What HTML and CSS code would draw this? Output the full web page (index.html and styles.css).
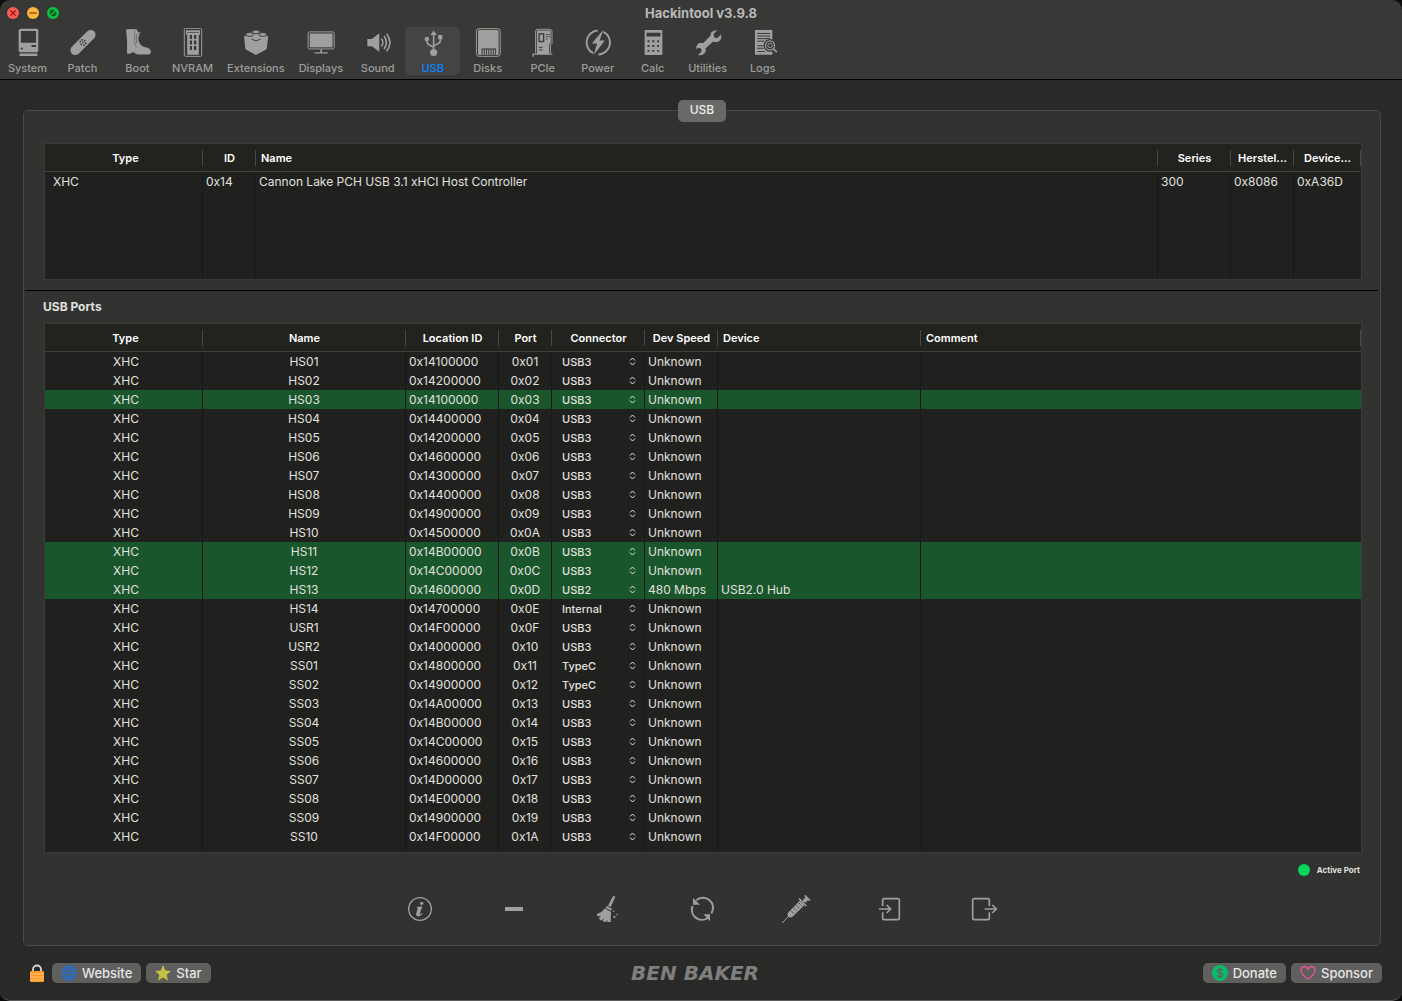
FILE: index.html
```html
<!DOCTYPE html>
<html lang="en">
<head>
<meta charset="utf-8">
<meta name="viewport" content="width=device-width, initial-scale=1">
<title>Hackintool v3.9.8</title>
<link rel="stylesheet" href="styles.css">
<script src="script.js" defer></script>
</head>
<body>
<div class="window">
  <header class="chrome">
    <div class="titlebar">
      <div class="lights">
        <button class="light" type="button" aria-label="Close"><svg viewBox="0 0 12 12"><circle cx="6" cy="6" r="6" fill="#fb5b57"/><path d="M3.4 3.4l5.2 5.2M8.6 3.4L3.4 8.6" stroke="#8c1410" stroke-width="1.2"/></svg></button>
        <button class="light" type="button" aria-label="Minimize"><svg viewBox="0 0 12 12"><circle cx="6" cy="6" r="6" fill="#fdb63f"/><path d="M2.2 6h7.6" stroke="#985712" stroke-width="1.5"/></svg></button>
        <button class="light" type="button" aria-label="Zoom"><svg viewBox="0 0 12 12"><circle cx="6" cy="6" r="6" fill="#05c446"/><circle cx="6" cy="6" r="3.4" fill="#0a5c1c"/><path d="M3.200 8.800L8.800 3.200" stroke="#05c446" stroke-width="1.400"/></svg></button>
      </div>
      <h1 class="title">Hackintool v3.9.8</h1>
    </div>
    <nav class="toolbar" aria-label="Sections">
      <button class="tool" type="button"><svg viewBox="0 0 90 90"><rect x="16" y="2" width="61" height="73" rx="6"/><rect class="cut" x="23" y="9" width="47" height="37" rx="2"/><path class="cut" d="M56 53h14v6H56zM22 61h7v5h-7z"/><path d="M19 79h55v8H19z"/></svg><span>System</span></button>
      <button class="tool" type="button"><svg viewBox="0 0 90 90"><g transform="rotate(-45 45 45)"><rect x="-4" y="30" width="98" height="30" rx="15"/><g class="cut"><circle cx="45" cy="45" r="2.7"/><circle cx="37" cy="45" r="2.7"/><circle cx="53" cy="45" r="2.7"/><circle cx="41" cy="37" r="2.7"/><circle cx="49" cy="37" r="2.7"/><circle cx="41" cy="53" r="2.7"/><circle cx="49" cy="53" r="2.7"/></g></g></svg><span>Patch</span></button>
      <button class="tool" type="button"><svg viewBox="0 0 90 90"><path d="M8 5q16-4 34 0l3 8 9 0q-3 4-7 5l4 3q-5 4-5 10 0 11 5 18 4 7 14 10l12 3q8 3 8 12 0 8-8 8H45q-6 0-11-5-6-3-9 0-3 4-14 2V57q1-14-1-28z"/><path class="line-cut dotted" d="M34 10q1 20 0 33 1 10 7 17"/><path class="line-cut dotted" d="M42 20q-4 18 0 28"/></svg><span>Boot</span></button>
      <button class="tool" type="button"><svg viewBox="0 0 90 90"><rect class="line" x="18" y="1" width="54" height="87" rx="4" stroke-width="3"/><path d="M23 7h44v14h-4v62H27V21h-4z"/><path class="line-cut" d="M27 14h36" stroke-width="2"/><path class="cut" d="M35 22h7v12h-7zM48 22h7v12h-7zM35 39h7v12h-7zM48 39h7v12h-7zM35 56h7v12h-7zM48 56h7v12h-7z"/></svg><span>NVRAM</span></button>
      <button class="tool" type="button"><svg viewBox="0 0 90 90"><path d="M8 26l37-20 38 20-5 40-33 18-33-18z"/><g class="lego"><ellipse cx="45" cy="12" rx="11" ry="6"/><ellipse cx="25" cy="20" rx="12" ry="6"/><ellipse cx="66" cy="20" rx="12" ry="6"/></g><path class="line-cut" d="M31 34q14 10 28 0" stroke-width="3"/></svg><span>Extensions</span></button>
      <button class="tool" type="button"><svg viewBox="0 0 90 90"><rect class="line" x="5" y="12" width="81" height="53" rx="5" stroke-width="3"/><rect x="10" y="17" width="71" height="43"/><path d="M43 66h5v9h-5zM25 75h41v4H25z"/></svg><span>Displays</span></button>
      <button class="tool" type="button"><svg viewBox="0 0 90 90"><path d="M12 34h14l23-18v58L26 57H12z"/><path class="line" d="M56 33q8 12 0 24M64 25q14 20 0 40M72 18q20 27 0 54" stroke-width="5"/></svg><span>Sound</span></button>
      <button class="tool selected" type="button" aria-current="page"><svg viewBox="0 0 90 90"><path d="M47 8l10 14H37zM61 22h13v13H61z"/><circle cx="47" cy="76" r="11"/><circle cx="26" cy="34" r="7"/><path class="line" d="M47 18v58M26 34v8q0 7 8 11l13 7M68 30v8q0 7-8 11l-13 6" stroke-width="5"/></svg><span>USB</span></button>
      <button class="tool" type="button"><svg viewBox="0 0 90 90"><rect class="line" x="9" y="2" width="74" height="86" rx="8" stroke-width="3"/><path d="M18 6h56q4 0 4 4v70q0 4-4 4h-4V64H25v20h-7q-4 0-4-4V10q0-4 4-4z"/><path d="M28 67h4v17h-4zM35 67h4v17h-4zM42 67h4v17h-4zM49 67h4v17h-4zM56 67h4v17h-4zM63 67h4v17h-4z"/></svg><span>Disks</span></button>
      <button class="tool" type="button"><svg viewBox="0 0 90 90"><path class="line" d="M22 78V10q0-6 6-6h38q7 0 7 7v37l-5 5v25" stroke-width="3"/><path d="M26 8h43v39l-5 5v27H26zM12 79h62v4H16v6h-4z"/><rect class="line-cut" x="33" y="18" width="14" height="24" stroke-width="4"/><path class="line-cut" d="M54 20h5M62 20h5M54 27h5M62 27h5M54 34h5M32 60h11M32 68h11" stroke-width="3"/></svg><span>PCIe</span></button>
      <button class="tool" type="button"><svg viewBox="0 0 90 90"><path class="line" d="M44 8A37 37 0 0 0 30 78M62 12A37 37 0 0 1 46 82" stroke-width="6"/><path d="M62 5L26 48h16L32 84l34-45H50z"/></svg><span>Power</span></button>
      <button class="tool" type="button"><svg viewBox="0 0 90 90"><rect x="19" y="6" width="55" height="78" rx="3"/><path class="cut" d="M25 15h43v11H25zM28 38h6v6h-6zM43 38h6v6h-6zM58 38h6v6h-6zM28 53h6v6h-6zM43 53h6v6h-6zM58 53h6v6h-6zM28 68h6v6h-6zM43 68h6v6h-6zM58 68h6v6h-6z"/></svg><span>Calc</span></button>
      <button class="tool" type="button"><svg viewBox="0 0 90 90"><path d="M74 7L62 19l2 10 9 3 13-12q3 15-7 21-8 5-18 1L37 64q3 10-4 16-8 7-19 4l11-11-2-9-9-3L8 66q-1-11 6-17 7-5 16-2l23-24Q51 8 74 7z"/></svg><span>Utilities</span></button>
      <button class="tool" type="button"><svg viewBox="0 0 90 90"><path d="M20 6h54v77H20z"/><path class="line-cut" d="M27 17h40M27 25h40M27 33h40M27 41h22M27 55h20M27 63h20M27 73h24" stroke-width="3"/><circle cx="67" cy="54" r="20" class="cut"/><circle class="line" cx="67" cy="54" r="14" stroke-width="4"/><circle class="line" cx="67" cy="54" r="7" stroke-width="3"/><path class="line" d="M76 63l12 12" stroke-width="5"/></svg><span>Logs</span></button>
    </nav>
  </header>

  <main class="content">
    <section class="panel">
      <div class="tabs"><button class="tab" type="button">USB</button></div>

      <div class="table-box">
        <table class="grid controllers">
          <colgroup><col class="w-type"><col class="w-port"><col><col class="w-speed"><col class="w-vendor"><col class="w-device-id"></colgroup>
          <thead><tr><th>Type</th><th>ID</th><th class="left">Name</th><th>Series</th><th>Herstel...</th><th>Device...</th></tr></thead>
          <tbody>
            <tr><td class="indent">XHC</td><td>0x14</td><td>Cannon Lake PCH USB 3.1 xHCI Host Controller</td><td>300</td><td>0x8086</td><td>0xA36D</td></tr>
            <tr class="filler"><td></td><td></td><td></td><td></td><td></td><td></td></tr>
          </tbody>
        </table>
      </div>

      <hr class="divider">
      <h2 class="heading">USB Ports</h2>

      <div class="table-box">
        <table class="grid ports">
          <colgroup><col class="w-type"><col class="w-name"><col class="w-location"><col class="w-port"><col class="w-location"><col class="w-speed"><col class="w-name"><col></colgroup>
          <thead><tr><th>Type</th><th>Name</th><th>Location ID</th><th>Port</th><th>Connector</th><th>Dev Speed</th><th class="left">Device</th><th class="left">Comment</th></tr></thead>
          <tbody id="port-rows"></tbody>
        </table>
      </div>

      <p class="legend"><span class="dot"></span>Active Port</p>

      <div class="actions">
        <button class="action" type="button" aria-label="Info"><svg viewBox="0 0 90 90"><circle class="line" cx="45" cy="45" r="34" stroke-width="4"/><circle cx="50" cy="28" r="5"/><path d="M36 39l16-2-8 24q0 3 7-4l2 2q-8 9-14 8-8-1-5-9l4-14q0-3-3-3z"/></svg></button>
        <button class="action" type="button" aria-label="Remove"><svg viewBox="0 0 90 90"><rect x="18" y="39" width="54" height="12" rx="1"/></svg></button>
        <button class="action" type="button" aria-label="Clear"><svg viewBox="0 0 90 90"><path d="M60 7q4-3 7 1L53 39l-8-4z"/><path d="M42 36l15 8-2 6-18-9z"/><path d="M35 43l19 10-1 31H42l2-7-6 7-9-2 4-9-8 7-8-7 7-7-11 1-1-8q15-1 23-16z"/><path d="M60 50h4v4h-4zM70 60h4v4h-4zM61 66h6v5h-6z"/></svg></button>
        <button class="action" type="button" aria-label="Refresh"><svg viewBox="0 0 90 90"><path class="line" d="M28 19A30 30 0 0 1 73 58M62 72A30 30 0 0 1 17 36" stroke-width="6"/><path d="M18 12v20h21zM69 81V61H49z"/></svg></button>
        <button class="action" type="button" aria-label="Inject"><svg viewBox="0 0 90 90"><path class="line" d="M3 87l22-22M63 27l16-16" stroke-width="3"/><path class="line" d="M71 4l16 16M54 14l22 22" stroke-width="5"/><path d="M75 9l8 8-10 9-8-8zM56 20l14 14-36 35q-9 3-12-1-5-4-1-12z"/><path class="line-cut" d="M30 50l8 8M38 42l8 8M46 34l8 8M54 27l8 8" stroke-width="3" stroke-dasharray="4 3"/></svg></button>
        <button class="action" type="button" aria-label="Import"><svg viewBox="0 0 90 90"><path class="line" d="M23 36V19q0-5 5-5h40q5 0 5 5v53q0 5-5 5H28q-5 0-5-5V55M12 45h34M35 33l12 12-12 12" stroke-width="5"/></svg></button>
        <button class="action" type="button" aria-label="Export"><svg viewBox="0 0 90 90"><path class="line" d="M61 36V19q0-5-5-5H16q-5 0-5 5v53q0 5 5 5h40q5 0 5-5V55M47 45h34M70 33l12 12-12 12" stroke-width="5"/></svg></button>
      </div>
    </section>
  </main>

  <footer class="footer">
    <div class="group">
      <svg class="lock" viewBox="0 0 14 18"><path d="M3 9V5.500a4 4 0 0 1 8 0V9" fill="none" stroke="#d8d8d8" stroke-width="1.800"/><rect y="7" width="14" height="11" rx="1" fill="#ff9a2e"/><path d="M0 10h14M0 13h14M0 16h14" stroke="#ffc069"/></svg>
      <button class="push" type="button"><svg viewBox="0 0 16 16"><g fill="none" stroke="#2d6bc4" stroke-width="1.300"><circle cx="8" cy="8" r="7.200"/><ellipse cx="8" cy="8" rx="3.600" ry="7.200"/><path d="M1 8h14M8 1v14M2 4.500h12M2 11.500h12"/></g></svg>Website</button>
      <button class="push" type="button"><svg viewBox="0 0 16 16"><path d="M8 0l2.300 5.400 5.700.5-4.300 3.900L13 15.600 8 12.500l-5 3.100 1.300-5.800L0 5.900l5.700-.5z" fill="#c5bf45"/></svg>Star</button>
    </div>
    <a class="brand" href="#">BEN BAKER</a>
    <div class="group end">
      <button class="push" type="button"><svg viewBox="0 0 16 16"><circle cx="8" cy="8" r="8" fill="#07bd6c"/><path d="M10.700 5.600Q10.200 4.200 8 4.200 5.500 4.200 5.500 6 5.500 7.400 8 8q2.700.6 2.700 2.200 0 1.700-2.700 1.700-2.400 0-2.900-1.600M8 2.600v10.800" fill="none" stroke="#5c625e" stroke-width="1.300"/></svg>Donate</button>
      <button class="push" type="button"><svg viewBox="0 0 16 16"><path d="M8 14.300Q.8 9.200.8 5.300.9 1.800 4.300 1.500 6.900 1.500 8 4.200 9.100 1.500 11.700 1.500q3.400.3 3.500 3.800 0 3.900-7.200 9z" fill="none" stroke="#e0559a" stroke-width="1.300"/></svg>Sponsor</button>
    </div>
  </footer>
</div>
</body>
</html>
```
FILE: styles.css
```css
* { box-sizing: border-box; }

body {
  margin: 0;
  background: #0c0c0c;
  color: #e0e0df;
  font: 12px/16px Inter, "Liberation Sans", sans-serif;
}

button, select { margin: 0; padding: 0; border: 0; background: none; color: inherit; font: inherit; }
h1, h2, p { margin: 0; }

.window {
  display: flex;
  flex-direction: column;
  min-height: 100vh;
  overflow: hidden;
  border-bottom: 1px solid #5b5b5a;
  border-radius: 10px;
  background: #292928;
}

/* Title bar and toolbar */
.chrome { background: #383836; border-bottom: 1px solid #000; }
.titlebar { display: grid; grid-template-columns: 1fr auto 1fr; align-items: center; height: 26px; padding: 0 7px; }
.lights { display: flex; gap: 8px; }
.light { width: 12px; height: 12px; }
.light svg { display: block; }
.title { color: #b9b9b8; font-size: 13px; font-weight: 700; line-height: 16px; }

.toolbar { display: flex; padding: 1px 0 4px; }
.tool {
  display: flex;
  flex-direction: column;
  align-items: center;
  min-width: 55px;
  height: 48px;
  padding: 1px 7px 0;
  border-radius: 5px;
  color: #9d9d9c;
  font-size: 11px;
  font-weight: 500;
  line-height: 14px;
  --surface: #383836;
}
.tool svg, .action svg { display: block; width: 30px; height: 30px; fill: #9f9f9e; }
.tool span { margin-top: 4px; }
.tool.selected { background: #444443; color: #0a84ff; --surface: #444443; }
.line { fill: none; stroke: #9f9f9e; }
.cut { fill: var(--surface); }
.line-cut { fill: none; stroke: var(--surface); }
.dotted { stroke-width: 3px; stroke-dasharray: 3 3; }
.lego { stroke: var(--surface); stroke-width: 3px; }

/* Panel */
.content { flex: 1; display: flex; padding: 30px 21px 0 23px; }
.panel { flex: 1; min-width: 0; border: 1px solid #4a4a49; border-radius: 5px; background: #323230; }
.tabs { display: flex; justify-content: center; margin-top: -11px; }
.tab { height: 22px; padding: 0 12px 2px; border-radius: 5px; background: #696968; color: #ececeb; font-size: 12px; font-weight: 500; }
.table-box { margin: 0 18px 0 20px; border: 1px solid #3b3b3a; background: #20201f; }
.tabs + .table-box { margin-top: 21px; }

.grid { width: 100%; border-collapse: separate; border-spacing: 0; table-layout: fixed; }
.grid th {
  height: 28px;
  padding: 0 5px;
  border-bottom: 1px solid #3f3f3e;
  background: linear-gradient(#484847, #484847) right 6px / 1px 16px no-repeat #22231f;
  color: #fff;
  font-size: 11px;
  font-weight: 600;
  white-space: nowrap;
}
.grid th.left { text-align: left; }
.grid td { height: 19px; padding: 0 3px; border-right: 1px solid #191918; line-height: 19px; white-space: nowrap; }
.grid td:last-child { border-right-color: transparent; }
.grid td.center { text-align: center; }
.grid th:first-child, .grid td:first-child { padding-left: 8px; }
.grid .active td { background: #19562c; }
.controllers .filler td { height: 88px; }
.ports .filler td { height: 6px; line-height: 6px; }

.w-type { width: 158px; }
.w-name { width: 203px; }
.w-location { width: 93px; }
.w-port { width: 53px; }
.w-speed { width: 73px; }
.w-vendor { width: 63px; }
.w-device-id { width: 67px; }

.picker { display: flex; align-items: center; padding: 0 4px 0 7px; }
.picker select { flex: 1; min-width: 0; height: 18px; padding-bottom: 1px; appearance: none; font-size: 11px; font-weight: 500; outline: 0; }
.picker option { background: #323230; }
.picker svg { width: 9px; height: 9px; fill: none; stroke: #e6e6e5; stroke-width: 1px; }

.divider { height: 1px; margin: 10px 2px 8px 1px; border: 0; background: #000; }
.heading { margin: 0 19px 8px; font-size: 12px; font-weight: 700; line-height: 16px; }
.legend { display: flex; justify-content: flex-end; align-items: center; gap: 7px; margin: 9px 20px 0; font-size: 8px; font-weight: 700; }
.dot { width: 12px; height: 12px; border-radius: 50%; background: #05d65b; }

.actions { display: flex; justify-content: center; gap: 64px; margin: 16px 0 21px; --surface: #323230; }
.action { width: 30px; height: 30px; }

/* Footer */
.footer { display: grid; grid-template-columns: 1fr auto 1fr; align-items: center; height: 54px; padding: 0 20px 0 30px; }
.group { display: flex; align-items: center; gap: 5px; }
.group.end { justify-content: flex-end; }
.lock { width: 14px; height: 18px; margin-right: 3px; }
.push {
  display: flex;
  align-items: center;
  gap: 5px;
  height: 20px;
  padding: 0 9px;
  border-radius: 5px;
  background: #5f5f5e;
  color: #e6e6e5;
  font-size: 13px;
  font-weight: 500;
}
.push svg { width: 16px; height: 16px; }
.brand { margin-right: 22px; color: #7f7f7e; font: italic 700 20px/20px "DejaVu Sans", sans-serif; text-decoration: none; }
```
FILE: script.js
```js
// name, location, port, connector, active, speed, device
const ports = [
  ["HS01", "0x14100000", "0x01", "USB3"],
  ["HS02", "0x14200000", "0x02", "USB3"],
  ["HS03", "0x14100000", "0x03", "USB3", true],
  ["HS04", "0x14400000", "0x04", "USB3"],
  ["HS05", "0x14200000", "0x05", "USB3"],
  ["HS06", "0x14600000", "0x06", "USB3"],
  ["HS07", "0x14300000", "0x07", "USB3"],
  ["HS08", "0x14400000", "0x08", "USB3"],
  ["HS09", "0x14900000", "0x09", "USB3"],
  ["HS10", "0x14500000", "0x0A", "USB3"],
  ["HS11", "0x14B00000", "0x0B", "USB3", true],
  ["HS12", "0x14C00000", "0x0C", "USB3", true],
  ["HS13", "0x14600000", "0x0D", "USB2", true, "480 Mbps", "USB2.0 Hub"],
  ["HS14", "0x14700000", "0x0E", "Internal"],
  ["USR1", "0x14F00000", "0x0F", "USB3"],
  ["USR2", "0x14000000", "0x10", "USB3"],
  ["SS01", "0x14800000", "0x11", "TypeC"],
  ["SS02", "0x14900000", "0x12", "TypeC"],
  ["SS03", "0x14A00000", "0x13", "USB3"],
  ["SS04", "0x14B00000", "0x14", "USB3"],
  ["SS05", "0x14C00000", "0x15", "USB3"],
  ["SS06", "0x14600000", "0x16", "USB3"],
  ["SS07", "0x14D00000", "0x17", "USB3"],
  ["SS08", "0x14E00000", "0x18", "USB3"],
  ["SS09", "0x14900000", "0x19", "USB3"],
  ["SS10", "0x14F00000", "0x1A", "USB3"],
];
const connectors = ["USB2", "USB3", "TypeC", "Internal"];

const rows = ports.map(([name, location, port, connector, active, speed = "Unknown", device = ""]) => {
  const options = connectors
    .map((c) => `<option${c === connector ? " selected" : ""}>${c}</option>`)
    .join("");
  return `<tr${active ? ' class="active"' : ""}>
    <td class="center">XHC</td><td class="center">${name}</td><td>${location}</td><td class="center">${port}</td>
    <td><div class="picker"><select aria-label="Connector for ${name}">${options}</select>
      <svg viewBox="0 0 9 9"><path d="M2 3.500L4.500 1 7 3.500M2 5.500L4.500 8 7 5.500"/></svg></div></td>
    <td>${speed}</td><td>${device}</td><td></td></tr>`;
});
rows.push(`<tr class="filler">${"<td></td>".repeat(8)}</tr>`);
document.getElementById("port-rows").innerHTML = rows.join("");
```
